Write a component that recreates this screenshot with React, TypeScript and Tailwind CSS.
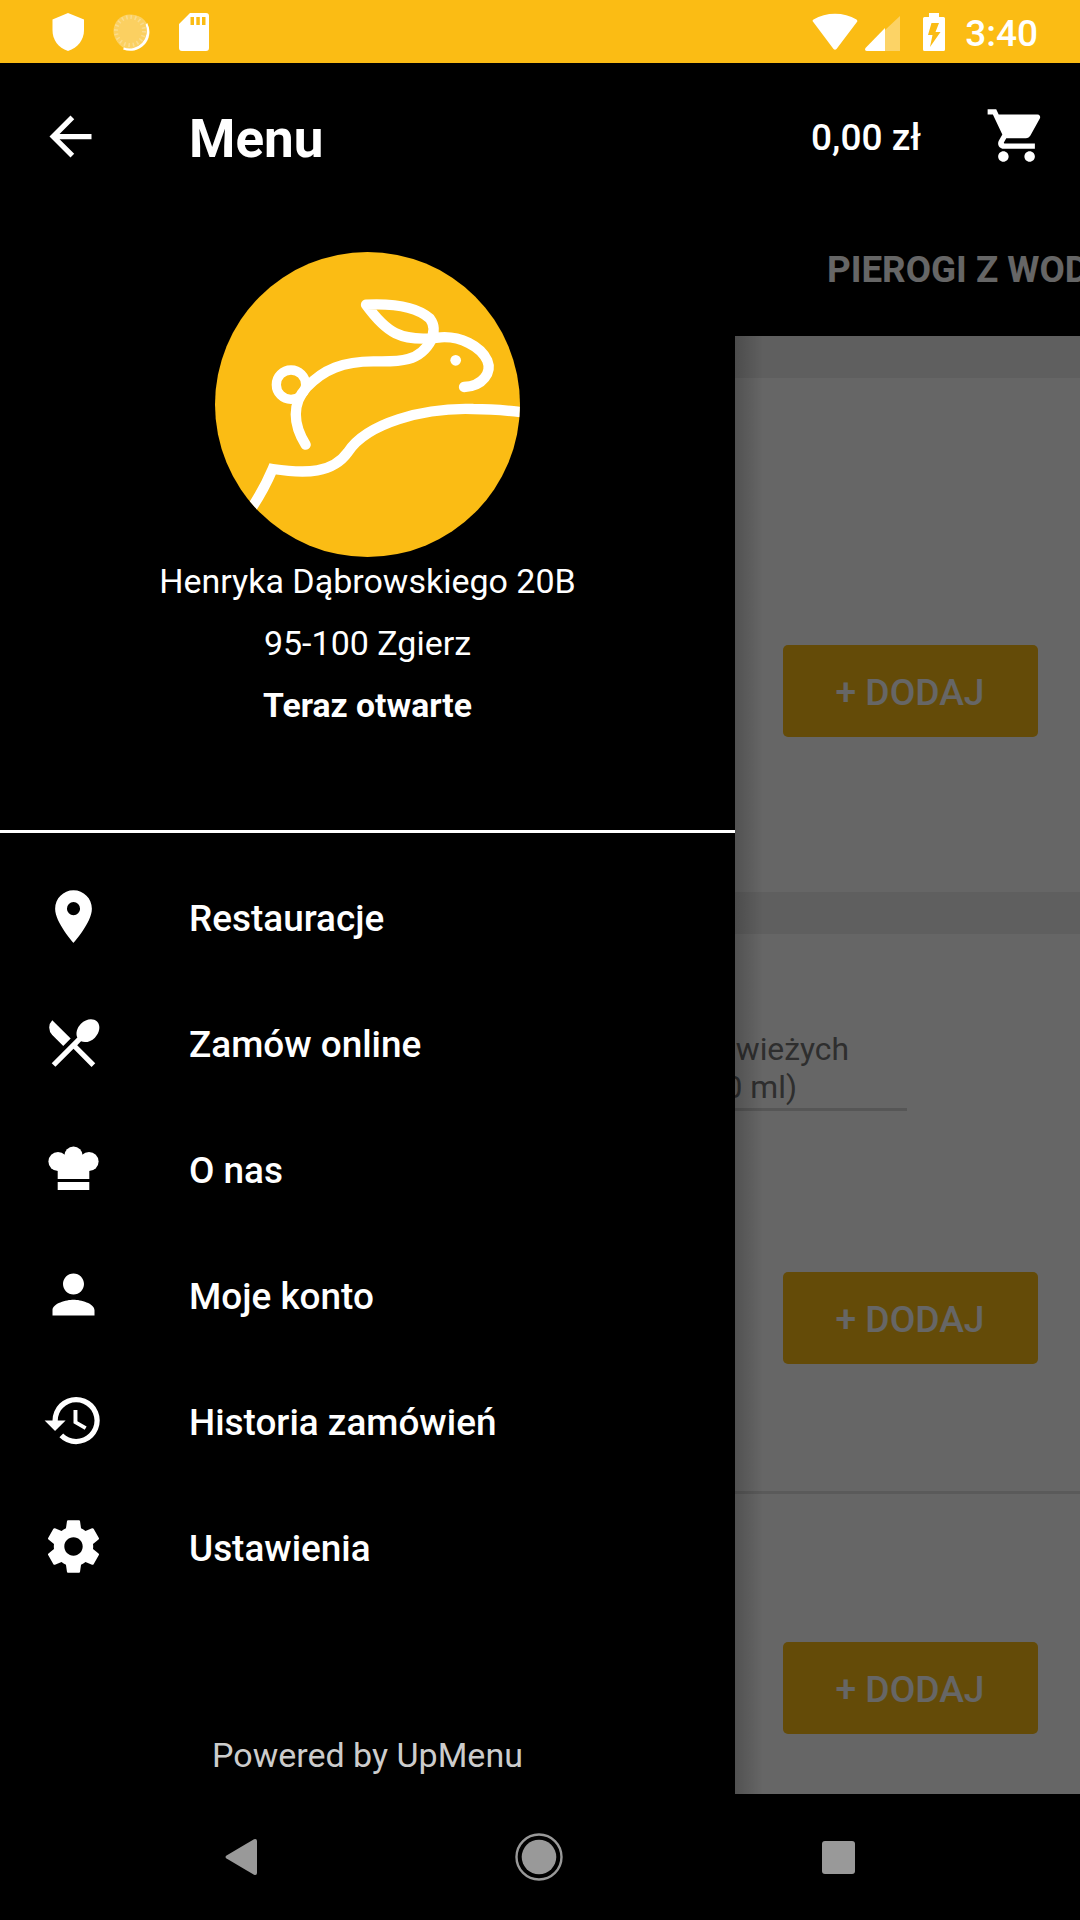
import React from 'react';
import {
  MdArrowBack,
  MdHistory,
  MdPerson,
  MdPlace,
  MdRestaurantMenu,
  MdShoppingCart,
} from 'react-icons/md';

const ChefHatIcon = ({ className }: { className?: string }) => (
  <svg viewBox="0 0 63 63" fill="currentColor" className={className}>
    <circle cx="16" cy="24.5" r="9.6" />
    <circle cx="31.5" cy="18.8" r="9.2" />
    <circle cx="47" cy="24.5" r="9.6" />
    <path d="M15.700 23h31.600v19H15.700zM15.700 45h31.600v8H15.700z" />
  </svg>
);

const GearIcon = ({ className }: { className?: string }) => (
  <svg viewBox="0 0 24 24" fill="currentColor" className={className}>
    <path d="M19.43 12.98c.04-.32.07-.64.07-.98s-.03-.66-.07-.98l2.11-1.65c.19-.15.24-.42.12-.64l-2-3.46c-.12-.22-.39-.3-.61-.22l-2.49 1c-.52-.4-1.08-.73-1.69-.98l-.38-2.65C14.46 2.18 14.25 2 14 2h-4c-.25 0-.46.18-.49.42l-.38 2.65c-.61.25-1.17.59-1.69.98l-2.49-1c-.23-.09-.49 0-.61.22l-2 3.46c-.13.22-.07.49.12.64l2.11 1.65c-.04.32-.07.65-.07.98s.03.66.07.98l-2.11 1.65c-.19.15-.24.42-.12.64l2 3.46c.12.22.39.3.61.22l2.49-1c.52.4 1.08.73 1.69.98l.38 2.65c.03.24.24.42.49.42h4c.25 0 .46-.18.49-.42l.38-2.65c.61-.25 1.17-.59 1.69-.98l2.49 1c.23.09.49 0 .61-.22l2-3.46c.12-.22.07-.49-.12-.64l-2.11-1.65zM12 15.5c-1.93 0-3.5-1.57-3.5-3.5s1.57-3.5 3.5-3.5 3.5 1.57 3.5 3.5-1.57 3.5-3.5 3.5z" />
  </svg>
);

const menuItems = [
  { label: 'Restauracje', icon: MdPlace },
  { label: 'Zamów online', icon: MdRestaurantMenu },
  { label: 'O nas', icon: ChefHatIcon },
  { label: 'Moje konto', icon: MdPerson },
  { label: 'Historia zamówień', icon: MdHistory },
  { label: 'Ustawienia', icon: GearIcon },
];

const StatusBar = () => (
  <div className="flex h-[63px] items-center justify-between bg-[#fbbc14] pl-[52px] pr-[42px] text-white">
    <div className="flex items-center">
      <svg viewBox="0 0 32 38" className="h-[38px] w-8" fill="currentColor">
        <path d="M16 0 32 6.5V17c0 10-6 17.5-16 21C6 34.5.5 27 .5 17V6.5z" />
      </svg>
      <svg viewBox="0 0 38 38" className="ml-[28px] h-[38px] w-[38px]">
        <circle cx="20" cy="19.5" r="17.5" fill="#fff" fillOpacity="0.35" />
        <path d="M34.5 11a18 18 0 0 1-23 24.5A18.5 18.5 0 0 0 34.5 11z" fill="#fff" stroke="#fff" strokeWidth="2" />
        <circle cx="18" cy="18" r="16.5" fill="#fbd061" />
        <circle cx="18" cy="18" r="14" fill="none" stroke="#fbdc8c" strokeWidth="4" strokeDasharray="1.5 2.9" />
      </svg>
      <svg viewBox="0 0 30 38" className="ml-[29px] h-[38px] w-[30px]" fill="currentColor">
        <path
          fillRule="evenodd"
          d="M11 0h16a3 3 0 0 1 3 3v32a3 3 0 0 1-3 3H3a3 3 0 0 1-3-3V11zM11.5 4v8H15V4zM17.3 4v8h3.5V4zM23 4v8h3.5V4z"
        />
      </svg>
    </div>
    <div className="flex items-center">
      <svg viewBox="0 0 46 38" className="h-[38px] w-[46px]" fill="currentColor">
        <path d="M.5 8Q.5 7 1.5 6.4C14-1.2 32-1.2 44.5 6.4Q45.5 7 45.3 8.5L24.5 36Q23 37.5 21.5 36z" />
      </svg>
      <svg viewBox="0 0 36 38" className="ml-[6px] h-[38px] w-9" fill="currentColor">
        <path d="M36 3v35H21V17z" fillOpacity="0.35" />
        <path d="M21 15v23H3q-3-.5-1.5-3z" />
      </svg>
      <svg viewBox="0 0 22 38" className="ml-[23px] h-[38px] w-[22px]" fill="currentColor">
        <path
          fillRule="evenodd"
          d="M6 0h10v4h4.5q1.5 0 1.5 1.5v31q0 1.500-1.500 1.500h-19Q0 38 0 36.500v-31Q0 4 1.500 4H6zM8.500 10 5 22h4.500L7 34l10.500-15h-5L16 10z"
        />
      </svg>
      <span className="ml-5 mt-1 text-[37px] font-medium leading-none">3:40</span>
    </div>
  </div>
);

const Toolbar = () => (
  <header className="flex h-[147px] items-center bg-black pl-[39px] pr-[32px] text-white">
    <MdArrowBack className="mb-px h-[63px] w-[63px]" />
    <h1 className="ml-[87px] mt-[5px] text-[53px] font-bold leading-none">Menu</h1>
    <span className="ml-auto mt-px text-[37px] font-medium leading-none">0,00 zł</span>
    <MdShoppingCart className="mb-[2px] ml-[64px] h-[63px] w-[63px]" />
  </header>
);

const AddButton = () => (
  <button className="flex h-[92px] w-[255px] shrink-0 items-center justify-center rounded-[5px] bg-[#fbbc14] pr-px pt-[3px] text-[37.2px] font-medium text-white">
    + DODAJ
  </button>
);

const RabbitLogo = () => (
  <svg viewBox="45 36 915 915" className="h-[305px] w-[305px] shrink-0 rounded-full bg-[#fbbc14]">
    <g fill="none" stroke="#fff" strokeWidth="31" strokeLinecap="round">
      <circle cx="273" cy="434" r="44" strokeWidth="28" />
      <path d="M317 614C278 552 276 490 320 442C370 388 430 364 520 364C600 366 660 366 695 298" />
      <path
        d="M792 441C850 438 876 396 862 362C842 318 780 288 722 292C600 308 558 276 498 194C580 190 650 200 690 236C706 258 702 280 692 298"
        strokeLinejoin="round"
      />
      <path
        d="M130 840Q185 765 218 687C320 702 398 700 444 636C500 550 670 502 820 507C880 507 920 511 975 518"
        strokeLinecap="butt"
      />
    </g>
    <circle cx="767" cy="361" r="16" fill="#fff" />
  </svg>
);

const Drawer = () => (
  <aside className="absolute inset-y-0 left-0 flex w-[735px] flex-col bg-black text-white">
    <div className="flex h-[620px] flex-col items-center pt-[42px]">
      <RabbitLogo />
      <div className="mt-1 flex flex-col items-center gap-[22px] text-[34px] leading-[40px]">
        <p>Henryka Dąbrowskiego 20B</p>
        <p>95-100 Zgierz</p>
        <p className="pt-px text-[33.7px] font-bold">Teraz otwarte</p>
      </div>
    </div>
    <div className="h-[3px] bg-white" />
    <nav className="pt-5">
      {menuItems.map(({ label, icon: Icon }) => (
        <a key={label} className="flex h-[126px] items-center pl-[42px]">
          <Icon className="h-[63px] w-[63px]" />
          <span className="ml-[84px] mt-[5px] text-[36.9px] font-medium">{label}</span>
        </a>
      ))}
    </nav>
    <p className="mb-[19px] mt-auto text-center text-[34px] leading-[40px] text-[#ccc]">
      Powered by UpMenu
    </p>
  </aside>
);

const ProductList = () => (
  <div className="flex h-full flex-col">
    <div className="flex h-[126px] shrink-0 items-center overflow-hidden bg-black pb-[7px] pl-[827px]">
      <span className="whitespace-nowrap text-[36.75px] font-bold text-white">PIEROGI Z WODY</span>
    </div>
    <div className="flex flex-1 flex-col bg-[#eee] pt-[42px]">
      <div className="flex h-[514px] justify-end bg-white pr-[42px] pt-[267px]">
        <AddButton />
      </div>
      <div className="mt-[42px] flex h-[560px] flex-col items-end border-b-[3px] border-[#e0e0e0] bg-white pt-[96px]">
        <div className="mr-[173px] w-[486px] border-b-[3px] border-[#d8d8d8] pb-[2px] pr-[58px] text-right text-[31.8px] leading-[38px] text-[#737373]">
          <p>ze świeżych</p>
          <p className="pr-[52px]">(500 ml)</p>
        </div>
        <div className="mr-[42px] mt-[161px]">
          <AddButton />
        </div>
      </div>
      <div className="flex flex-1 justify-end bg-white pr-[42px] pt-[148px]">
        <AddButton />
      </div>
    </div>
  </div>
);

const NavigationBar = () => (
  <footer className="flex h-[126px] items-center justify-between bg-black px-[225px] text-[#999]">
    <svg viewBox="0 0 32 38" className="h-[38px] w-8" fill="currentColor">
      <path d="M1.5 17.5 29 1.3Q32 .5 32 3v32q0 2.5-3 1.7L1.5 20.5Q-.5 19 1.5 17.5z" />
    </svg>
    <svg viewBox="0 0 48 48" className="mb-px mr-[1px] h-12 w-12">
      <circle cx="24" cy="24" r="22.5" fill="none" stroke="currentColor" strokeWidth="2.4" />
      <circle cx="24" cy="24" r="17.3" fill="currentColor" />
    </svg>
    <div className="h-[33px] w-[33px] rounded-[3px] bg-[#999]" />
  </footer>
);

export default function App() {
  return (
    <div className="flex h-[1920px] w-[1080px] flex-col overflow-hidden bg-black font-[Roboto,sans-serif]">
      <StatusBar />
      <Toolbar />
      <main className="relative h-[1584px] overflow-hidden">
        <ProductList />
        <div className="absolute inset-0 bg-black/60" />
        <div className="absolute inset-y-0 left-[735px] w-[28px] bg-gradient-to-r from-black/20 to-transparent" />
        <Drawer />
      </main>
      <NavigationBar />
    </div>
  );
}
